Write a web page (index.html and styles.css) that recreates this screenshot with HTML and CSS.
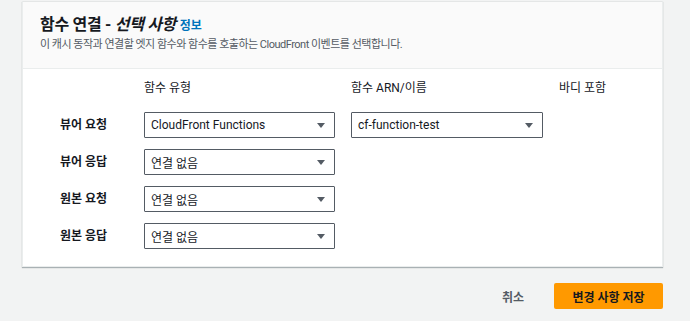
FILE: index.html
```html
<!DOCTYPE html>
<html lang="ko">
<head>
    <meta charset="UTF-8">
    <meta name="viewport" content="width=device-width, initial-scale=1.0">
    <title>함수 연결</title>
    <link rel="stylesheet" href="styles.css">
</head>
<body>
    <div class="page">
        <div class="card">
            <div class="card-header">
                <h2 class="card-title">함수 연결 - <em>선택 사항</em> <a href="#" class="info-link">정보</a></h2>
                <p class="card-desc">이 캐시 동작과 연결할 엣지 함수와 함수를 호출하는 CloudFront 이벤트를 선택합니다.</p>
            </div>

            <div class="card-body">
                <div class="assoc-grid">
                    <div></div>
                    <div class="col-head">함수 유형</div>
                    <div class="col-head">함수 ARN/이름</div>
                    <div class="col-head">바디 포함</div>

                    <div class="row-label">뷰어 요청</div>
                    <div class="select"><span>CloudFront Functions</span><span class="caret"></span></div>
                    <div class="select"><span>cf-function-test</span><span class="caret"></span></div>
                    <div></div>

                    <div class="row-label">뷰어 응답</div>
                    <div class="select"><span>연결 없음</span><span class="caret"></span></div>
                    <div></div>
                    <div></div>

                    <div class="row-label">원본 요청</div>
                    <div class="select"><span>연결 없음</span><span class="caret"></span></div>
                    <div></div>
                    <div></div>

                    <div class="row-label">원본 응답</div>
                    <div class="select"><span>연결 없음</span><span class="caret"></span></div>
                    <div></div>
                    <div></div>
                </div>
            </div>
        </div>

        <div class="actions">
            <button type="button" class="btn-link">취소</button>
            <button type="button" class="btn-primary">변경 사항 저장</button>
        </div>
    </div>
</body>
</html>
```

FILE: styles.css
```css
body {
    margin: 0;
    background-color: #f2f3f3;
    font-family: Roboto, "Noto Sans CJK KR", sans-serif;
    color: #16191f;
}

.page {
    padding: 1px 27px 0 22px;
}

.card {
    background-color: #ffffff;
    border: 1px solid #eaeded;
    border-top-color: #e4e6e6;
    box-shadow: 0 1px 1px 0 rgba(0, 28, 36, 0.3);
}

.card-header {
    background-color: #fafafa;
    border-bottom: 1px solid #eaeded;
    padding: 13px 17px 13px;
    height: 40px;
}

.card-title {
    margin: 0;
    font-size: 16px;
    font-weight: 700;
    line-height: 20px;
    letter-spacing: -0.3px;
}

.card-title em {
    font-style: italic;
}

.info-link {
    color: #0073bb;
    font-size: 12px;
    font-weight: 700;
    letter-spacing: 0;
    text-decoration: none;
}

.card-desc {
    margin: 1px 0 0;
    font-size: 11px;
    line-height: 16px;
    letter-spacing: -0.5px;
    color: #545b64;
}

.card-body {
    padding: 11px 0 17px 37px;
}

.assoc-grid {
    display: grid;
    grid-template-columns: 68px 191px 192px 1fr;
    column-gap: 16px;
    row-gap: 11px;
    align-items: center;
}

.col-head {
    font-size: 12px;
    line-height: 16px;
    margin-bottom: 5px;
}

.row-label {
    font-size: 12px;
    font-weight: 700;
    padding-bottom: 3px;
}

.select {
    height: 24px;
    border: 1px solid #545b64;
    border-radius: 1px;
    display: flex;
    align-items: center;
    justify-content: space-between;
    padding: 0 9px 0 6px;
    font-size: 12px;
}

.caret {
    width: 0;
    height: 0;
    border-left: 4px solid transparent;
    border-right: 4px solid transparent;
    border-top: 5px solid #545b64;
}

.actions {
    display: flex;
    justify-content: flex-end;
    align-items: center;
    gap: 30px;
    margin-top: 16px;
}

.btn-link {
    background: none;
    border: none;
    padding: 0;
    font-family: inherit;
    font-size: 12px;
    font-weight: 700;
    color: #545b64;
}

.btn-primary {
    width: 109px;
    height: 26px;
    background-color: #ff9900;
    border: none;
    border-radius: 2px;
    font-family: inherit;
    font-size: 12px;
    font-weight: 700;
    color: #16191f;
}
```
